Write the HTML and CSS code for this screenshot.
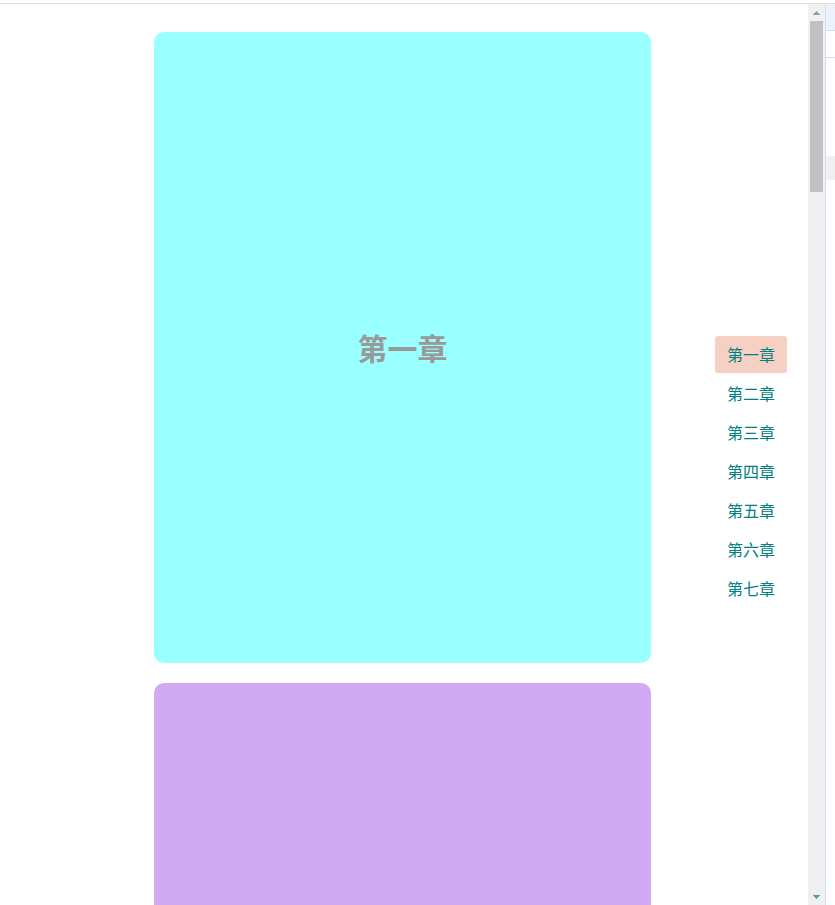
FILE: index.html
```
<!DOCTYPE html>
<html lang="zh-CN">
<head>
  <meta charset="UTF-8">
  <meta name="viewport" content="width=device-width, initial-scale=1.0">
  <title>章节导航</title>
  <link rel="stylesheet" href="styles.css">
</head>
<body>
  <div class="window">
    <div class="view">
      <main class="content">
        <section class="chapter chapter-one" id="chapter1"><h1>第一章</h1></section>
        <section class="chapter chapter-two" id="chapter2"></section>
      </main>

      <nav class="chapter-nav">
        <a class="active" href="#chapter1">第一章</a>
        <a href="#chapter2">第二章</a>
        <a href="#chapter3">第三章</a>
        <a href="#chapter4">第四章</a>
        <a href="#chapter5">第五章</a>
        <a href="#chapter6">第六章</a>
        <a href="#chapter7">第七章</a>
      </nav>
    </div>

    <div class="scrollbar">
      <svg class="arrow arrow-up" viewBox="0 0 17 17"><path d="M8 7h1v1h1v1h1v1h1v1H5v-1h1V9h1V8h1z"/></svg>
      <div class="thumb"></div>
      <svg class="arrow arrow-down" viewBox="0 0 17 17"><path d="M5 7h7v1h-1v1h-1v1H9v1H8v-1H7V9H6V8H5z"/></svg>
    </div>

    <!-- 右侧面板边缘 -->
    <aside class="panel">
      <div class="panel-tabs"></div>
      <div class="panel-toolbar"></div>
      <div class="panel-row"></div>
    </aside>
  </div>
</body>
</html>
```

FILE: styles.css
```
* {
  box-sizing: border-box;
}

body {
  margin: 0;
  padding-top: 3px;
  height: 100vh;
  overflow: hidden;
  background-color: #fff;
  font-family: "Noto Sans CJK SC", sans-serif;
}

.window {
  display: flex;
  height: 100%;
  border-top: 1px solid #dedede;
}

.view {
  flex: 1;
  display: flex;
  align-items: flex-start;
  min-width: 0;
  overflow: hidden;
  padding: 28px 21px 0 154px;
}

.content {
  flex: 1;
}

.chapter {
  display: flex;
  align-items: center;
  justify-content: center;
  height: calc((100vh - 4px) * 0.7);
  margin-bottom: 20px;
  border-radius: 10px;
}

.chapter h1 {
  margin: 0;
  color: #999;
  font-size: 30px;
  line-height: 40px;
}

.chapter-one {
  background-color: #9ff;
}

.chapter-two {
  background-color: #d1aaf3;
}

.chapter-nav {
  display: flex;
  flex-direction: column;
  gap: 2px;
  width: 72px;
  margin: 304px 0 0 64px;
}

.chapter-nav a {
  padding: 6px 0 7px;
  border-radius: 3px;
  color: #008080;
  font-size: 16px;
  line-height: 24px;
  text-align: center;
  text-decoration: none;
}

.chapter-nav .active {
  background-color: #f6d1c3;
}

.scrollbar {
  display: flex;
  flex-direction: column;
  width: 17px;
  background-color: #f0f0f0;
}

.arrow {
  width: 17px;
  height: 17px;
}

.arrow-up {
  fill: #8fa3a3;
}

.arrow-down {
  margin-top: auto;
  fill: #4fa5a5;
}

.thumb {
  height: 171px;
  margin: 0 2px;
  background-color: #c1c1c1;
}

.panel {
  width: 10px;
  border-left: 1px solid #d0e0fc;
}

.panel-tabs {
  height: 27px;
  background-color: #ecf1fa;
  border-bottom: 1px solid #d0e0fc;
}

.panel-toolbar {
  height: 27px;
  border-bottom: 1px solid #d0e0fc;
}

.panel-row {
  height: 24px;
  margin-top: 98px;
  background-color: #f0f0f0;
}
```
